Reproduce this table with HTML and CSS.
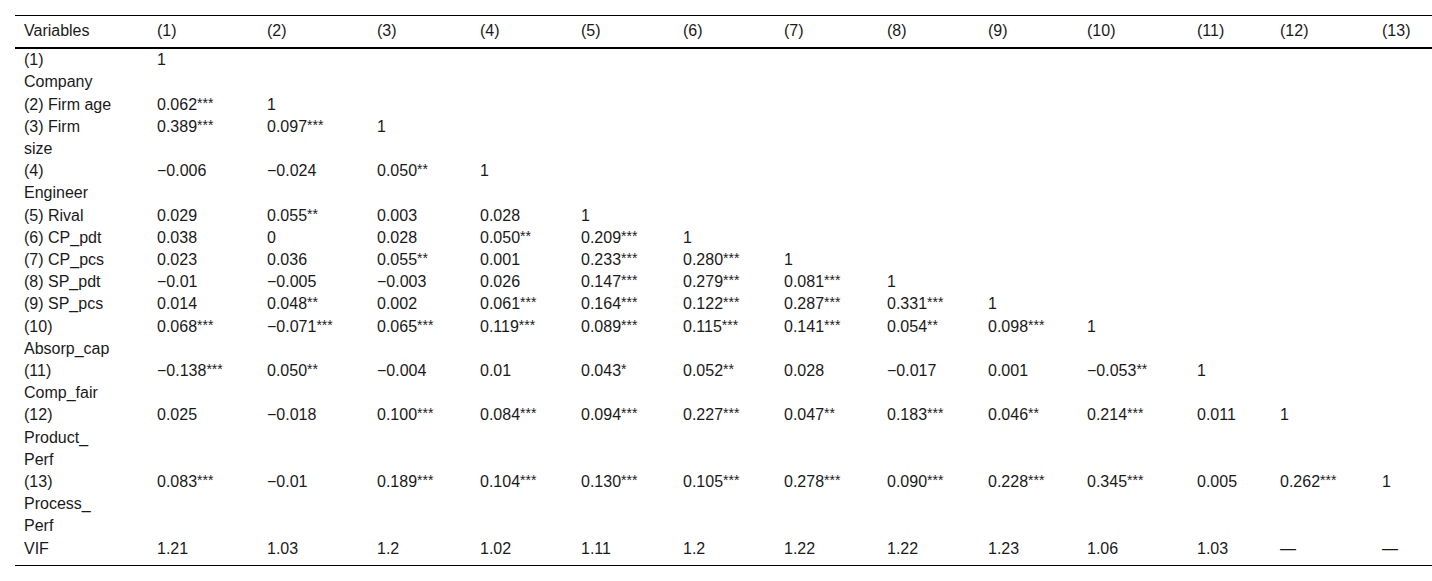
FILE: index.html
```html
<!DOCTYPE html>
<html lang="en">
<head>
<meta charset="utf-8">
<title>Correlation matrix</title>
<link rel="stylesheet" href="styles.css">
</head>
<body>
<table class="corr">
  <colgroup>
    <col class="c-var">
    <col class="c1"><col class="c2"><col class="c3"><col class="c4"><col class="c5">
    <col class="c6"><col class="c7"><col class="c8"><col class="c9"><col class="c10">
    <col class="c11"><col class="c12"><col class="c13">
  </colgroup>
  <thead>
    <tr>
      <th>Variables</th><th>(1)</th><th>(2)</th><th>(3)</th><th>(4)</th><th>(5)</th><th>(6)</th><th>(7)</th><th>(8)</th><th>(9)</th><th>(10)</th><th>(11)</th><th>(12)</th><th>(13)</th>
    </tr>
  </thead>
  <tbody>
    <tr><td>(1)<br>Company</td><td>1</td><td></td><td></td><td></td><td></td><td></td><td></td><td></td><td></td><td></td><td></td><td></td><td></td></tr>
    <tr><td>(2) Firm age</td><td>0.062<span class="s">***</span></td><td>1</td><td></td><td></td><td></td><td></td><td></td><td></td><td></td><td></td><td></td><td></td><td></td></tr>
    <tr><td>(3) Firm<br>size</td><td>0.389<span class="s">***</span></td><td>0.097<span class="s">***</span></td><td>1</td><td></td><td></td><td></td><td></td><td></td><td></td><td></td><td></td><td></td><td></td></tr>
    <tr><td>(4)<br>Engineer</td><td>−0.006</td><td>−0.024</td><td>0.050<span class="s">**</span></td><td>1</td><td></td><td></td><td></td><td></td><td></td><td></td><td></td><td></td><td></td></tr>
    <tr><td>(5) Rival</td><td>0.029</td><td>0.055<span class="s">**</span></td><td>0.003</td><td>0.028</td><td>1</td><td></td><td></td><td></td><td></td><td></td><td></td><td></td><td></td></tr>
    <tr><td>(6) CP_pdt</td><td>0.038</td><td>0</td><td>0.028</td><td>0.050<span class="s">**</span></td><td>0.209<span class="s">***</span></td><td>1</td><td></td><td></td><td></td><td></td><td></td><td></td><td></td></tr>
    <tr><td>(7) CP_pcs</td><td>0.023</td><td>0.036</td><td>0.055<span class="s">**</span></td><td>0.001</td><td>0.233<span class="s">***</span></td><td>0.280<span class="s">***</span></td><td>1</td><td></td><td></td><td></td><td></td><td></td><td></td></tr>
    <tr><td>(8) SP_pdt</td><td>−0.01</td><td>−0.005</td><td>−0.003</td><td>0.026</td><td>0.147<span class="s">***</span></td><td>0.279<span class="s">***</span></td><td>0.081<span class="s">***</span></td><td>1</td><td></td><td></td><td></td><td></td><td></td></tr>
    <tr><td>(9) SP_pcs</td><td>0.014</td><td>0.048<span class="s">**</span></td><td>0.002</td><td>0.061<span class="s">***</span></td><td>0.164<span class="s">***</span></td><td>0.122<span class="s">***</span></td><td>0.287<span class="s">***</span></td><td>0.331<span class="s">***</span></td><td>1</td><td></td><td></td><td></td><td></td></tr>
    <tr><td>(10)<br>Absorp_cap</td><td>0.068<span class="s">***</span></td><td>−0.071<span class="s">***</span></td><td>0.065<span class="s">***</span></td><td>0.119<span class="s">***</span></td><td>0.089<span class="s">***</span></td><td>0.115<span class="s">***</span></td><td>0.141<span class="s">***</span></td><td>0.054<span class="s">**</span></td><td>0.098<span class="s">***</span></td><td>1</td><td></td><td></td><td></td></tr>
    <tr><td>(11)<br>Comp_fair</td><td>−0.138<span class="s">***</span></td><td>0.050<span class="s">**</span></td><td>−0.004</td><td>0.01</td><td>0.043<span class="s">*</span></td><td>0.052<span class="s">**</span></td><td>0.028</td><td>−0.017</td><td>0.001</td><td>−0.053<span class="s">**</span></td><td>1</td><td></td><td></td></tr>
    <tr><td>(12)<br>Product_<br>Perf</td><td>0.025</td><td>−0.018</td><td>0.100<span class="s">***</span></td><td>0.084<span class="s">***</span></td><td>0.094<span class="s">***</span></td><td>0.227<span class="s">***</span></td><td>0.047<span class="s">**</span></td><td>0.183<span class="s">***</span></td><td>0.046<span class="s">**</span></td><td>0.214<span class="s">***</span></td><td>0.011</td><td>1</td><td></td></tr>
    <tr><td>(13)<br>Process_<br>Perf</td><td>0.083<span class="s">***</span></td><td>−0.01</td><td>0.189<span class="s">***</span></td><td>0.104<span class="s">***</span></td><td>0.130<span class="s">***</span></td><td>0.105<span class="s">***</span></td><td>0.278<span class="s">***</span></td><td>0.090<span class="s">***</span></td><td>0.228<span class="s">***</span></td><td>0.345<span class="s">***</span></td><td>0.005</td><td>0.262<span class="s">***</span></td><td>1</td></tr>
    <tr class="last"><td>VIF</td><td>1.21</td><td>1.03</td><td>1.2</td><td>1.02</td><td>1.11</td><td>1.2</td><td>1.22</td><td>1.22</td><td>1.23</td><td>1.06</td><td>1.03</td><td>—</td><td>—</td></tr>
  </tbody>
</table>
</body>
</html>
```

FILE: styles.css
```css
html, body {
  margin: 0;
  padding: 0;
  background: #ffffff;
}

body {
  font-family: "Liberation Sans", Arial, sans-serif;
  font-size: 16px;
  color: #1a1a1a;
}

.corr {
  table-layout: fixed;
  width: 1417px;
  margin: 15px 0 0 15px;
  border-collapse: separate;
  border-spacing: 0;
  border-top: 1px solid #000;
  border-bottom: 1px solid #000;
}

.c-var { width: 133px; }
.c1 { width: 110px; }
.c2 { width: 110px; }
.c3 { width: 103px; }
.c4 { width: 101px; }
.c5 { width: 102px; }
.c6 { width: 101px; }
.c7 { width: 103px; }
.c8 { width: 101px; }
.c9 { width: 99px; }
.c10 { width: 110px; }
.c11 { width: 83px; }
.c12 { width: 102px; }
.c13 { width: 59px; }

.corr th,
.corr td {
  text-align: left;
  vertical-align: top;
  font-weight: normal;
  line-height: 22.2px;
  padding: 0 0 0 9px;
  white-space: nowrap;
}

.corr th {
  padding-top: 4px;
  padding-bottom: 5px;
  border-bottom: 2px solid #000;
}

.corr .last td {
  padding-bottom: 5px;
}

.s {
  font-size: 14px;
  line-height: 0;
  vertical-align: 2px;
}
```
